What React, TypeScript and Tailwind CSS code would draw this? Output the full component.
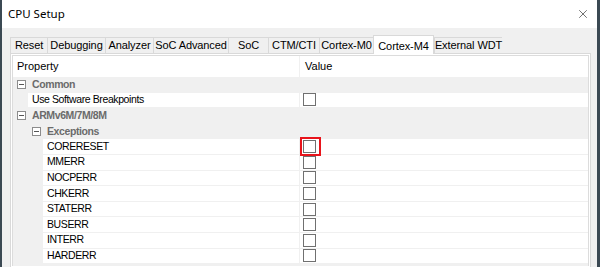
import { X } from 'lucide-react';

type Row =
  | { kind: 'cat'; label: string; level: number }
  | { kind: 'prop'; label: string; level: number; highlight?: boolean };

const rows: Row[] = [
  { kind: 'cat', label: 'Common', level: 0 },
  { kind: 'prop', label: 'Use Software Breakpoints', level: 1 },
  { kind: 'cat', label: 'ARMv6M/7M/8M', level: 0 },
  { kind: 'cat', label: 'Exceptions', level: 1 },
  { kind: 'prop', label: 'CORERESET', level: 2, highlight: true },
  { kind: 'prop', label: 'MMERR', level: 2 },
  { kind: 'prop', label: 'NOCPERR', level: 2 },
  { kind: 'prop', label: 'CHKERR', level: 2 },
  { kind: 'prop', label: 'STATERR', level: 2 },
  { kind: 'prop', label: 'BUSERR', level: 2 },
  { kind: 'prop', label: 'INTERR', level: 2 },
  { kind: 'prop', label: 'HARDERR', level: 2 },
];

const tabs = [
  { label: 'Reset', w: 'w-[37px]' },
  { label: 'Debugging', w: 'w-[58px]' },
  { label: 'Analyzer', w: 'w-[48px]' },
  { label: 'SoC Advanced', w: 'w-[75px]' },
  { label: 'SoC', w: 'w-[40px]' },
  { label: 'CTM/CTI', w: 'w-[51px]' },
  { label: 'Cortex-M0', w: 'w-[54px]' },
  { label: 'Cortex-M4', w: 'w-[61px]', active: true },
  { label: 'External WDT', w: 'w-[68px]' },
];

function MinusBox() {
  return (
    <span className="w-[9px] h-[9px] border border-[#8c8c8c] bg-white flex items-center justify-center shrink-0">
      <span className="w-[5px] h-px bg-[#555]" />
    </span>
  );
}

function CheckBox() {
  return <span className="block w-[13px] h-[13px] border border-[#707070] bg-white" />;
}

export default function App() {
  return (
    <div className="w-[600px] h-[267px] overflow-hidden bg-[#f0f0f0] border-l-2 border-r-[3px] border-[#3b4953] flex flex-col font-['Noto_Sans',sans-serif]">
      {/* Title bar */}
      <div className="h-[28px] bg-white flex items-center justify-between pl-[6px] pr-[7px] shrink-0">
        <span className="text-[11.5px] text-black">CPU Setup</span>
        <X className="w-[14px] h-[14px] text-[#222]" strokeWidth={1.1} />
      </div>

      <div className="flex-1 pl-[8px] pt-[7px] flex flex-col">
        {/* Tab strip */}
        <div className="h-[18px] flex items-end shrink-0 font-['Liberation_Sans',sans-serif] text-[11px] tracking-[-0.1px] whitespace-nowrap">
          {tabs.map(t =>
            t.active ? (
              <div
                key={t.label}
                className={`${t.w} h-[19px] -mb-px relative z-10 bg-white border border-b-0 border-[#d9d9d9] text-black flex items-start pt-[2px] justify-center`}
              >
                {t.label}
              </div>
            ) : (
              <div
                key={t.label}
                className={`${t.w} h-[16px] bg-[#f0f0f0] border border-b-0 border-r-0 border-[#d9d9d9] text-black flex items-center justify-center leading-none`}
              >
                {t.label}
              </div>
            )
          )}
        </div>

        {/* Tab panel */}
        <div className="w-[581px] flex-1 border border-b-0 border-[#d9d9d9] bg-white p-px">
          <div className="h-full border border-b-0 border-[#dcdcdc] bg-[#f0f0f0] font-['Liberation_Sans',sans-serif] text-[10.5px] tracking-[-0.4px] text-black">
            {/* Header */}
            <div className="h-[21px] bg-white flex items-center text-[11px] tracking-normal">
              <div className="w-[287px] h-full flex items-center pl-[4px] border-r border-[#f0f0f0]">Property</div>
              <div className="flex-1 pl-[5px]">Value</div>
            </div>

            {rows.map(r => {
              const gutter = r.level === 0 ? 'w-0' : r.level === 1 ? 'w-[15px]' : 'w-[30px]';
              if (r.kind === 'cat') {
                return (
                  <div key={r.label} className="h-[15.6px] flex items-center bg-[#f0f0f0]">
                    <div className={`${gutter} shrink-0`} />
                    <div className="flex items-center pl-[4px] gap-[6px]">
                      <MinusBox />
                      <span className="font-bold text-[#6b6b6b]">{r.label}</span>
                    </div>
                  </div>
                );
              }
              return (
                <div key={r.label} className="h-[15.6px] flex">
                  <div className={`${gutter} shrink-0`} />
                  <div className="flex-1 flex bg-white border-b border-[#f0f0f0]">
                    <div
                      className={`${r.level === 1 ? 'w-[272px]' : 'w-[257px]'} flex items-center pl-[4px] border-r border-[#f0f0f0]`}
                    >
                      {r.label}
                    </div>
                    <div className="flex-1 flex items-center pl-[3px] relative">
                      <CheckBox />
                      {r.highlight && (
                        <span className="absolute left-0 top-[-2px] w-[21px] h-[19px] border-2 border-[#e8141b]" />
                      )}
                    </div>
                  </div>
                </div>
              );
            })}
          </div>
        </div>
      </div>
    </div>
  );
}
